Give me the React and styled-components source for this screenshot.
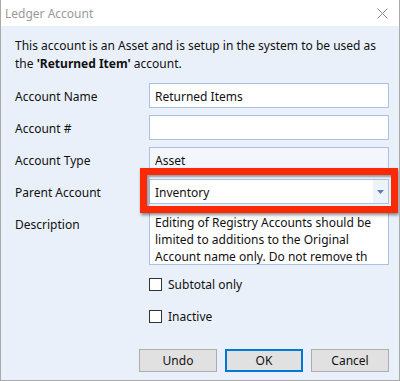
import React from 'react'
import styled, { createGlobalStyle } from 'styled-components';

const GlobalStyle = createGlobalStyle`
  html, body {
    margin: 0;
    padding: 0;
    background: #ffffff;
  }
  body {
    font-family: "Noto Sans", "Open Sans", "Liberation Sans", sans-serif;
    font-size: 12px;
    color: #000;
  }
`;

const App = () => {
  return (
    <>
      <GlobalStyle />
      <Window>
        <TitleBar>
          <Title>Ledger Account</Title>
          <CloseButton aria-label="Close">
            <svg width="11" height="11" viewBox="0 0 11 11">
              <path d="M0.5 0.5 L10.5 10.5 M10.5 0.5 L0.5 10.5" stroke="#8a8a8a" strokeWidth="1" fill="none" />
            </svg>
          </CloseButton>
        </TitleBar>
        <Body>
          <Intro>
            <IntroLine>This account is an Asset and is setup in the system to be used as</IntroLine>
            <IntroLine>the <b>'Returned Item'</b> account.</IntroLine>
          </Intro>
          <Form>
            <Label>Account Name</Label>
            <TextBox defaultValue="Returned Items" />

            <Label>Account #</Label>
            <TextBox defaultValue="" />

            <Label>Account Type</Label>
            <TextBox defaultValue="Asset" readOnly $readOnly />

            <Label>Parent Account</Label>
            <ComboWrap>
              <Combo>
                <ComboText>Inventory</ComboText>
                <ComboArrow>
                  <svg width="7" height="4" viewBox="0 0 7 4">
                    <path d="M0 0 L7 0 L3.5 4 Z" fill="#5b7fae" />
                  </svg>
                </ComboArrow>
              </Combo>
              <Highlight />
            </ComboWrap>

            <Label>Description</Label>
            <TextArea>
              Editing of Registry Accounts should be limited to additions to the Original Account name only. Do not remove th
            </TextArea>

            <Spacer />
            <CheckRow>
              <CheckBox />
              Subtotal only
            </CheckRow>

            <Spacer />
            <CheckRow>
              <CheckBox />
              Inactive
            </CheckRow>
          </Form>
          <Buttons>
            <Button>Undo</Button>
            <Button $primary>OK</Button>
            <Button>Cancel</Button>
          </Buttons>
        </Body>
      </Window>
    </>
  )
};

// Styled Comps
const Window = styled.div`
  width: 400px;
  height: 381px;
  box-sizing: border-box;
  border: 1px solid #a9a9a9;
  border-top: none;
  display: flex;
  flex-direction: column;
  overflow: hidden;
`;
const TitleBar = styled.div`
  height: 26px;
  flex-shrink: 0;
  background: #ffffff;
  display: flex;
  align-items: center;
  justify-content: space-between;
  padding: 0 10px 0 4px;
`;
const Title = styled.span`
  color: #999999;
  font-size: 12px;
`;
const CloseButton = styled.div`
  width: 11px;
  height: 11px;
  display: flex;
  margin-right: 1px;
`;
const Body = styled.div`
  flex: 1;
  background: #e9f0fa;
  padding: 11px 9px 0 14px;
  display: flex;
  flex-direction: column;
`;
const Intro = styled.div`
  margin: 0;
  color: #111;
  b {
    font-weight: 700;
  }
`;
const IntroLine = styled.div`
  height: 18px;
  line-height: 18px;
  white-space: nowrap;
`;
const Form = styled.div`
  margin-top: 10px;
  display: grid;
  grid-template-columns: 134px 240px;
  row-gap: 7px;
`;
const Label = styled.div`
  height: 25px;
  line-height: 27px;
  color: #111;
`;
const TextBox = styled.input`
  box-sizing: border-box;
  width: 240px;
  height: 25px;
  margin: 0;
  border: 1px solid #aac3e0;
  background: ${p => (p.$readOnly ? '#f3f7fd' : '#ffffff')};
  font: inherit;
  color: #111;
  padding: 2px 5px 0;
  outline: none;
`;
const ComboWrap = styled.div`
  position: relative;
  width: 240px;
  height: 25px;
`;
const Combo = styled.div`
  box-sizing: border-box;
  height: 25px;
  border: 1px solid #aac3e0;
  background: #ffffff;
  display: flex;
  align-items: center;
  justify-content: space-between;
`;
const ComboText = styled.span`
  padding: 2px 0 0 5px;
  color: #111;
`;
const ComboArrow = styled.span`
  width: 15px;
  height: 100%;
  background: #eef3fa;
  display: flex;
  align-items: center;
  justify-content: center;
`;
const Highlight = styled.div`
  position: absolute;
  left: -9px;
  top: -11px;
  width: 258px;
  height: 45px;
  box-sizing: border-box;
  border: 7px solid #fa2a07;
  box-shadow: 1px 2px 3px rgba(0, 0, 0, 0.45), inset 2px 2px 2px rgba(0, 0, 0, 0.35);
  pointer-events: none;
`;
const TextArea = styled.div`
  box-sizing: border-box;
  width: 240px;
  height: 54px;
  border: 1px solid #aac3e0;
  background: #ffffff;
  padding: 2px 5px 0;
  line-height: 17px;
  overflow: hidden;
  color: #111;
`;
const Spacer = styled.div``;
const CheckRow = styled.label`
  display: flex;
  align-items: center;
  gap: 6px;
  height: 25px;
  color: #111;
`;
const CheckBox = styled.span`
  display: inline-block;
  box-sizing: border-box;
  width: 13px;
  height: 13px;
  border: 1px solid #333333;
  background: #ffffff;
`;
const Buttons = styled.div`
  margin-top: auto;
  margin-bottom: 8px;
  display: flex;
  justify-content: flex-end;
  gap: 8px;
  padding-right: 1px;
`;
const Button = styled.button`
  box-sizing: border-box;
  width: 78px;
  height: 23px;
  margin: 0;
  font: inherit;
  color: #111;
  background: #e1e1e1;
  border: ${p => (p.$primary ? '2px solid #0078d7' : '1px solid #adadad')};
  padding: 0;
`;

export default App;
